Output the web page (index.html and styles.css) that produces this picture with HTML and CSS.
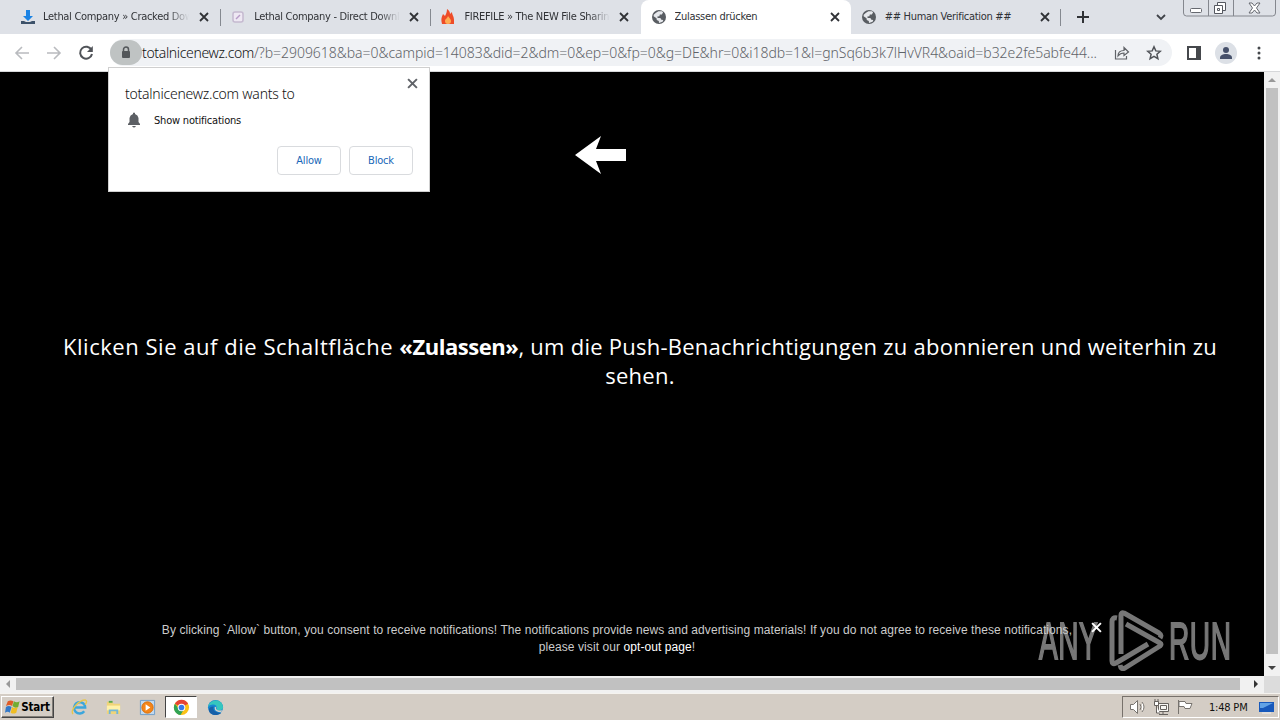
FILE: index.html
```html
<!DOCTYPE html>
<html lang="de">
<head>
  <meta charset="UTF-8">
  <title>Zulassen drücken</title>
  <link rel="stylesheet" href="styles.css">
</head>
<body>
  <svg class="defs" width="0" height="0">
    <symbol id="close" viewBox="0 0 10 10"><path d="M1 1l8 8M9 1L1 9" fill="none" stroke="currentColor" stroke-width="1.8"/></symbol>
    <symbol id="globe" viewBox="0 0 16 16"><circle cx="8" cy="8" r="7" fill="#595d62"/><path d="M7.5 2.2l3.4.1 1.2 1-1.2 2.1-2.1.2-.4 1.7-2 .3.2 1.4 2.8.1 1 1.6 1.9.2-.7 1.9-3.6 1.3-.2-2.1-2-.9-.3-1.9-2.9-2 .1-1.4L5 3.7z" fill="#e6e8ec"/></symbol>
  </svg>

  <div class="tabs">
    <div class="tab">
      <svg class="favicon" viewBox="0 0 16 16"><path d="M6 1h4v6h3l-5 5-5-5h3z" fill="#1b83e4"/><path d="M1 12h3l2 1h4l2-1h3v3H1z" fill="#3d526a"/></svg>
      <span class="tab-title fade">Lethal Company » Cracked Down</span>
      <svg class="close"><use href="#close"/></svg>
    </div>
    <div class="tab line">
      <svg class="favicon" viewBox="0 0 16 16"><rect x="3" y="3" width="10" height="10" rx="2" fill="#eee8f3" stroke="#c5b9d0" stroke-width="1.5"/><path d="M6 10l4-4" stroke="#b79bc8" stroke-width="1.5"/></svg>
      <span class="tab-title fade">Lethal Company - Direct Downl</span>
      <svg class="close"><use href="#close"/></svg>
    </div>
    <div class="tab line">
      <svg class="favicon" viewBox="0 0 16 16"><path d="M7 0c3 2 3 4 3 5l2-2c0 3 2 4 2 8v4H2c-1-4-1-6 1-10l2 2c1-2 2-4 2-7z" fill="#ee4c28"/><path d="M8 7c1 2 3 3 3 5s-1 3-3 3-3-1-3-3 2-2 3-5z" fill="#ffae54"/></svg>
      <span class="tab-title fade">FIREFILE » The NEW File Sharing</span>
      <svg class="close"><use href="#close"/></svg>
    </div>
    <div class="tab active">
      <svg class="favicon"><use href="#globe"/></svg>
      <span class="tab-title">Zulassen drücken</span>
      <svg class="close"><use href="#close"/></svg>
    </div>
    <div class="tab last">
      <svg class="favicon"><use href="#globe"/></svg>
      <span class="tab-title">## Human Verification ##</span>
      <svg class="close"><use href="#close"/></svg>
    </div>
    <div class="new-tab">
      <svg width="12" height="12" viewBox="0 0 12 12"><path d="M6 0v12M0 6h12" stroke="#303236" stroke-width="2"/></svg>
    </div>
    <svg class="chevron" width="10" height="7" viewBox="0 0 10 7"><path d="M1 1l4 4 4-4" fill="none" stroke="#404349" stroke-width="1.8"/></svg>
    <svg class="window-buttons" width="93" height="17" viewBox="0 0 93 17">
      <path d="M.5 0v13q0 3 3 3h86q3 0 3-3V0M25.5 0v16M50.5 0v16" fill="none" stroke="#84878e"/>
      <rect x="7.5" y="8.5" width="11" height="4" rx="1" fill="#fff" stroke="#666970"/>
      <path d="M34.5 2.5h8v8h-8z" fill="#fff" stroke="#555860"/><path d="M31.5 5.5h8v8h-8zM34.5 8.5h2v2h-2z" fill="#fff" stroke="#555860"/>
      <path d="M66 3h3l2.5 3L74 3h3l-3.5 5 3.5 5h-3l-2.5-3L69 13h-3l3.5-5z" fill="#fff" stroke="#666970"/>
    </svg>
  </div>

  <div class="toolbar">
    <svg class="nav" viewBox="0 0 16 16"><path d="M15 8H2M8 2L2 8l6 6" fill="none" stroke="#b9bbbf" stroke-width="1.6"/></svg>
    <svg class="nav" viewBox="0 0 16 16"><path d="M1 8h13M8 2l6 6-6 6" fill="none" stroke="#b9bbbf" stroke-width="1.6"/></svg>
    <svg class="nav" viewBox="0 0 16 16"><path d="M13.5 5A6 6 0 1 0 14 9" fill="none" stroke="#505358" stroke-width="2"/><path d="M14.8 1v6H9z" fill="#505358"/></svg>
    <div class="address">
      <div class="lock"><svg width="10" height="13" viewBox="0 0 10 13"><path d="M2.5 6V3.5a2.5 2.5 0 0 1 5 0V6" fill="none" stroke="#53575a" stroke-width="1.5"/><rect x="1" y="5" width="8" height="7" rx="1" fill="#53575a"/></svg></div>
      <div class="url"><span class="host">totalnicenewz.com</span><span class="query">/?b=2909618&amp;ba=0&amp;campid=14083&amp;did=2&amp;dm=0&amp;ep=0&amp;fp=0&amp;g=DE&amp;hr=0&amp;i18db=1&amp;l=gnSq6b3k7lHvVR4&amp;oaid=b32e2fe5abfe44...</span></div>
      <svg class="share" width="16" height="16" viewBox="0 0 16 16"><path d="M1.5 5v9h11v-3M4 11c0-4 3-5.500 6-5.500V2.500L14.500 7 10 10.500V8c-3 0-4.500 1-6 3z" fill="none" stroke="#606368" stroke-width="1.2"/></svg>
      <svg class="star" width="16" height="16" viewBox="0 0 16 16"><path d="M8 1.8l1.8 4.1 4.5.4-3.4 3 1 4.4L8 11.400l-3.900 2.300 1-4.400-3.400-3 4.500-.4z" fill="none" stroke="#505358" stroke-width="1.5"/></svg>
    </div>
    <svg class="panel" width="16" height="16" viewBox="0 0 16 16"><path d="M2 2h12v12H2z" fill="none" stroke="#45484c" stroke-width="2"/><path d="M10 2h4v12h-4z" fill="#45484c"/></svg>
    <svg class="profile" width="22" height="22" viewBox="0 0 22 22"><circle cx="11" cy="11" r="11" fill="#dce0e6"/><circle cx="11" cy="8" r="3" fill="#46506a"/><path d="M5 16c0-3 3-4 6-4s6 1 6 4v1H5z" fill="#46506a"/></svg>
    <svg class="menu" width="4" height="16" viewBox="0 0 4 16"><g fill="#45484c"><circle cx="2" cy="3" r="1.5"/><circle cx="2" cy="8" r="1.5"/><circle cx="2" cy="13" r="1.5"/></g></svg>
  </div>

  <div class="viewport">
    <main class="page">
      <svg class="arrow" width="52" height="40" viewBox="0 0 52 40"><path d="M1 20L27 1l-5 13h30v12H22l5 13z" fill="#fff"/></svg>
      <p class="message"><span class="lead">Klicken Sie auf die Schaltfläche </span><b>«Zulassen»</b>, um die Push-Benachrichtigungen zu abonnieren und weiterhin zu<br>sehen.</p>
      <div class="watermark">
        <span>ANY</span>
        <svg width="55" height="62" viewBox="0 0 55 62"><g fill="none" stroke="#777" stroke-width="5" stroke-linejoin="round"><path d="M8 8Q3 7 3 12v39q0 4 4 2l32-19"/><path d="M12 44V5q0-3 3-2l35 20q3 2 1 5"/><path d="M17 14l34 19q2 1 0 3L16 58q-4 2-5-3"/></g></svg>
        <span>RUN</span>
      </div>
      <div class="consent">
        <p>By clicking `Allow` button, you consent to receive notifications! The notifications provide news and advertising materials! If you do not agree to receive these notifications,<br>please visit our <a>opt-out page</a>!</p>
      </div>
      <svg class="consent-close"><use href="#close"/></svg>
    </main>
    <div class="scroll-y">
      <svg viewBox="0 0 16 16"><path d="M4 10l4-4 4 4z" fill="#999"/></svg>
      <div class="thumb"></div>
      <svg viewBox="0 0 16 16"><path d="M4 6h8l-4 4z" fill="#444"/></svg>
    </div>
    <div class="scroll-x">
      <svg viewBox="0 0 16 16"><path d="M10 4v8L6 8z" fill="#999"/></svg>
      <div class="thumb"></div>
      <svg viewBox="0 0 16 16"><path d="M6 4v8l4-4z" fill="#333"/></svg>
    </div>
    <div class="corner"></div>
  </div>

  <div class="taskbar">
    <button class="start">
      <svg width="16" height="16" viewBox="0 0 17 16"><path d="M3 2q3-2 6 0L7.5 7Q5 5 1 7z" fill="#e05b26"/><path d="M9.5 2q3 2 6 0L14 8q-3 2-6-1z" fill="#72ac32"/><path d="M1 8q3-2 6 0l-2 6q-2-2-5 0z" fill="#3278c8"/><path d="M7.5 8q3 2 6 0L12 14q-3 2-6 0z" fill="#efbd24"/></svg>Start
    </button>
    <div class="launchers">
      <span class="app"><svg viewBox="0 0 18 18"><path d="M14.5 6.5A6 6 0 1 0 14 13M4 9h11q0-2-1-3" fill="none" stroke="#3ca6dc" stroke-width="2.6"/><path d="M2 16C-1 11 9 1 15 1q3 1 0 5" fill="none" stroke="#e7c64d" stroke-width="1.5"/></svg></span>
      <span class="app"><svg viewBox="0 0 18 18"><path d="M2 3h6l1 2h7v11H2z" fill="#f0d479"/><path d="M2 7h14v5H2z" fill="#fff1a9"/><path d="M4 16v-5h10v5h-2v-3H6v3z" fill="#72b7d8"/><path d="M4 3h4" stroke="#5ba94a" stroke-width="2"/></svg></span>
      <span class="app"><svg viewBox="0 0 18 18"><path d="M1.5 1.5h15v15h-15z" fill="#c2d9ee" stroke="#6f9dc8"/><circle cx="9" cy="9" r="6" fill="#f48519" stroke="#d66d0b"/><path d="M7 5.5l5 3.5-5 3.5z" fill="#fff"/></svg></span>
      <span class="app selected"><svg viewBox="0 0 18 18"><circle cx="9" cy="9" r="8" fill="#fbc116"/><path d="M9 9L2 5a8 8 0 0 1 14 0z" fill="#e64435"/><path d="M2 5a8 8 0 0 0 6 12l4-7H6z" fill="#31a354"/><circle cx="9" cy="9" r="4" fill="#fff"/><circle cx="9" cy="9" r="3" fill="#3879e8"/></svg></span>
      <span class="app"><svg viewBox="0 0 18 18"><circle cx="9" cy="9" r="8" fill="#1686d2"/><path d="M1 9C2-1 17-1 17 9c0 3-5 4-7 2 2-3-1-6-5-5-2 0-4 2-4 3z" fill="#36c6be"/><path d="M7 8q-2 6 8 7c-4 3-12 3-13-3q0-4 5-4z" fill="#1760a8"/><path d="M10 8q-2 5 6 4l-1 2q-7 0-7-5z" fill="#d4d0c8"/></svg></span>
    </div>
    <div class="tray">
      <svg width="17" height="16" viewBox="0 0 17 16"><path d="M1.5 5.5h3l4-4v13l-4-4h-3zM11 5q2 3 0 6M13 3q4 5 0 10" fill="#fff" stroke="#77736e"/></svg>
      <svg width="17" height="16" viewBox="0 0 17 16"><path d="M5.5 4.5h10v8h-10zM7.5 6.5h6v4h-6zM10 13v2M6 15.5h9" fill="#f7f6f3" stroke="#66625e"/><path d="M1.5 2.5h4v4h-4zM2 0v3M5 0v3M3.5 7v7H7" fill="#fff" stroke="#66625e"/></svg>
      <svg width="17" height="16" viewBox="0 0 17 16"><path d="M1.5 1v14M2 2.5h6l1 2h6l-2 5H8l-1-2H2z" fill="#fff" stroke="#77736e"/></svg>
      <time>1:48 PM</time>
      <svg width="17" height="16" viewBox="0 0 17 16"><path d="M1 3h15v10H1z" fill="#1859bb"/><path d="M2 4h13L5 9H2z" fill="#62a3e6"/><path d="M4 14h9" stroke="#efefef"/></svg>
    </div>
  </div>

  <div class="permission">
    <svg class="permission-close"><use href="#close"/></svg>
    <h1>totalnicenewz.com wants to</h1>
    <div class="permission-item">
      <svg width="14" height="16" viewBox="0 0 14 16"><path d="M1 13v-1l1.5-2V6Q3 3 6 2V1q1-1 2 0v1q3 1 3.5 4v4l1.5 2v1zM5 14h4q-2 3-4 0z" fill="#5c5f64"/></svg>
      <span>Show notifications</span>
    </div>
    <div class="permission-actions"><button>Allow</button><button>Block</button></div>
  </div>
</body>
</html>
```
FILE: styles.css
```css
* {
  box-sizing: border-box;
}
body {
  margin: 0;
  width: 1280px;
  height: 720px;
  overflow: hidden;
  display: flex;
  flex-direction: column;
  font-family: "DejaVu Sans Condensed", "DejaVu Sans", sans-serif;
  font-size: 11px;
  color: #303236;
}
svg {
  display: block;
  flex: none;
}
.defs {
  position: absolute;
}
p, h1 {
  margin: 0;
}
button {
  font: inherit;
}

/* browser tabs */
.tabs {
  height: 34px;
  flex: none;
  display: flex;
  align-items: center;
  padding-left: 10px;
  background: #dee1e7;
}
.tab {
  width: 210.2px;
  height: 34px;
  display: flex;
  align-items: center;
  padding: 0 10px;
}
.line {
  background: linear-gradient(#858990, #858990) 0 9px / 1px 17px no-repeat;
}
.active {
  background: #fff;
  border-radius: 8px 8px 0 0;
}
.favicon {
  width: 16px;
  height: 16px;
}
.tab-title {
  width: 148px;
  margin-left: 7px;
  overflow: hidden;
  white-space: nowrap;
  line-height: 18px;
  letter-spacing: -.3px;
}
.line .tab-title, .active .tab-title, .last .tab-title {
  width: 147px;
  margin-left: 8px;
}
.fade {
  mask-image: linear-gradient(90deg, #000 125px, transparent 146px);
}
.close {
  width: 10px;
  height: 10px;
  margin-left: 8px;
}
.new-tab {
  width: 46px;
  height: 17px;
  display: flex;
  justify-content: center;
  align-items: center;
  border-left: 1px solid #858990;
  margin-left: -1px;
}
.chevron {
  margin-left: 50px;
}
.window-buttons {
  margin-left: 17px;
  align-self: flex-start;
}

/* address bar */
.toolbar {
  height: 38px;
  flex: none;
  display: flex;
  align-items: center;
  padding-left: 14px;
  background: #fff;
  border-bottom: 1px solid #d6d7d9;
}
.nav {
  width: 16px;
  height: 16px;
  margin-right: 16px;
}
.address {
  width: 1062px;
  height: 27px;
  border-radius: 14px;
  background: #f0f2f5;
  display: flex;
  align-items: center;
}
.lock {
  width: 32px;
  height: 25px;
  flex: none;
  border-radius: 13px;
  background: #bfc3c3;
  display: flex;
  align-items: center;
  justify-content: center;
}
.url {
  width: 972px;
  white-space: nowrap;
  font: 300 14px "Noto Sans", sans-serif;
}
.host {
  color: #111;
  letter-spacing: -.35px;
}
.query {
  color: #5f6368;
  letter-spacing: -.04px;
}
.star {
  margin-left: 16px;
}
.panel {
  margin-left: 14px;
}
.profile {
  margin-left: 13px;
}
.menu {
  margin-left: 20px;
}

/* web page and its scrollbars */
.viewport {
  height: 621px;
  flex: none;
  display: grid;
  grid-template: 604px 17px / 1264px 16px;
}
.page {
  position: relative;
  background: #000;
  color: #fff;
}
.arrow {
  margin: 63px 0 0 574px;
}
.message {
  margin-top: 157px;
  text-align: center;
  font: 22px/29px "Open Sans", sans-serif;
  padding-left: 16px;
  white-space: nowrap;
  letter-spacing: .25px;
}
.lead {
  letter-spacing: .53px;
}
.message b {
  letter-spacing: -.45px;
}
.consent {
  position: relative;
  margin-top: 232px;
  width: 1234px;
  color: #ccc;
  text-align: center;
  font: 12px/17px "Liberation Sans", sans-serif;
  letter-spacing: .08px;
  white-space: nowrap;
}
.consent a {
  color: #fff;
}
.consent-close {
  position: absolute;
  left: 1091px;
  top: 550px;
  width: 11px;
  height: 11px;
}
.watermark {
  position: absolute;
  left: 1039px;
  top: 538px;
  display: flex;
  align-items: center;
  color: #777;
  font: 52px/62px "Liberation Sans", sans-serif;
  -webkit-text-stroke: 2px #777;
}
.watermark span {
  width: 112px;
  transform: scaleX(.54);
  transform-origin: left;
  letter-spacing: 1px;
}
.watermark span:first-child {
  margin-right: -42px;
}
.watermark span:last-child {
  margin-left: 5px;
}
.scroll-y, .scroll-x {
  display: flex;
  background: #f1f1f1;
}
.scroll-y {
  flex-direction: column;
}
.scroll-y svg, .scroll-x svg {
  width: 16px;
  height: 16px;
}
.thumb {
  background: #c1c1c1;
}
.scroll-y .thumb {
  height: 566px;
  width: 12px;
  margin: 0 2px 6px;
}
.scroll-x .thumb {
  height: 12px;
  width: 1224px;
  margin: 2px 8px 0 0;
}
.corner {
  background: #dcdcdc;
}

/* Windows taskbar */
.taskbar {
  height: 27px;
  flex: none;
  display: flex;
  align-items: center;
  background: #d4cdc5;
  border-top: 1px solid #f5f3ef;
  color: #111;
}
.start {
  width: 53px;
  height: 22px;
  margin-left: 1px;
  padding: 0;
  display: flex;
  align-items: center;
  justify-content: center;
  border: 1px solid;
  border-color: #fff #444 #444 #fff;
  box-shadow: inset -1px -1px #817d77;
  background: #d4cdc5;
  color: #000;
  font: bold 11.5px "DejaVu Sans Condensed", sans-serif;
  letter-spacing: -.2px;
}
.launchers {
  display: flex;
  margin-left: 9px;
  gap: 2px;
}
.app {
  width: 32px;
  height: 22px;
  display: flex;
  align-items: center;
  justify-content: center;
}
.app svg {
  width: 17px;
  height: 17px;
}
.selected {
  background: #fff;
  border: 1px solid;
  border-color: #444 #fff #fff #444;
}
.tray {
  width: 157px;
  height: 22px;
  margin-left: auto;
  margin-right: 1px;
  display: flex;
  align-items: center;
  gap: 7px;
  padding-left: 6px;
  border: 1px solid;
  border-color: #77716b #fff #fff #77716b;
}
time {
  width: 42px;
  margin-left: 8px;
  white-space: nowrap;
  letter-spacing: -.2px;
}

/* permission prompt */
.permission {
  position: absolute;
  left: 108px;
  top: 67px;
  width: 322px;
  height: 125px;
  padding: 16px 16px 0;
  background: #fff;
  border: 1px solid #cfcfcf;
  color: #111;
}
.permission h1 {
  font: 300 14px/19px "Noto Sans", sans-serif;
  letter-spacing: -.24px;
}
.permission-close {
  position: absolute;
  right: 11px;
  top: 10px;
  width: 11px;
  height: 11px;
  color: #606368;
}
.permission-item {
  display: flex;
  align-items: center;
  margin-top: 9px;
  padding-left: 2px;
  gap: 13px;
  letter-spacing: -.2px;
}
.permission-actions {
  display: flex;
  justify-content: flex-end;
  gap: 8px;
  margin-top: 18px;
}
.permission-actions button {
  width: 64px;
  height: 29px;
  padding: 0;
  background: #fff;
  border: 1px solid #d9dbde;
  border-radius: 4px;
  color: #1967b8;
  letter-spacing: -.2px;
}
```
